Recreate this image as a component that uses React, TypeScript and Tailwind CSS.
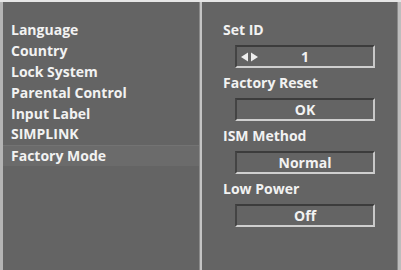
const menu = [
  "Language",
  "Country",
  "Lock System",
  "Parental Control",
  "Input Label",
  "SIMPLINK",
  "Factory Mode",
];

const options = [
  { label: "Set ID", value: "1", arrows: true },
  { label: "Factory Reset", value: "OK" },
  { label: "ISM Method", value: "Normal" },
  { label: "Low Power", value: "Off" },
];

function Arrows() {
  return (
    <svg width="17" height="10" viewBox="0 0 17 10" className="absolute left-[4px] top-[5px]">
      <path d="M0 5 L7 0.5 L7 9.5 Z" fill="#eeeeee" />
      <path d="M17 5 L10 0.5 L10 9.5 Z" fill="#eeeeee" />
    </svg>
  );
}

export default function App() {
  return (
    <div
      className="w-[401px] h-[270px] bg-[#646464] flex border-t-2 border-t-[#e6e6e6] overflow-hidden text-[#f2f2f2] font-bold text-[14px]"
      style={{ fontFamily: '"Open Sans", "Liberation Sans", sans-serif' }}
    >
      <div className="w-[3px] bg-[#b4b4b4]" />
      <div className="w-[196px] pt-[18px]">
        {menu.map((m) => (
          <div
            key={m}
            className={
              "h-[20.8px] flex items-center pl-[8px] leading-none " +
              (m === "Factory Mode" ? "bg-[#6b6b6b] border-t border-[#737373]" : "")
            }
          >
            {m}
          </div>
        ))}
      </div>
      <div className="w-[1px] bg-[#8a8a8a]" />
      <div className="w-[2px] bg-[#c4c4c4]" />
      <div className="flex-1 pt-[19px] pl-[21px] flex flex-col">
        {options.map((o) => (
          <div key={o.label} className="flex flex-col mb-[6px]">
            <div className="h-[18px] flex items-center leading-none">{o.label}</div>
            <div className="relative ml-[12px] mt-[6px] w-[140px] h-[23px] border-t-2 border-l-2 border-t-[#3c3c3c] border-l-[#444444] border-b-2 border-r-2 border-b-[#cfcfcf] border-r-[#c8c8c8] flex items-center justify-center leading-none">
              {o.arrows && <Arrows />}
              {o.value}
            </div>
          </div>
        ))}
      </div>
      <div className="w-[1px] bg-[#8a8a8a]" />
      <div className="w-[3px] bg-[#bdbdbd]" />
    </div>
  );
}
